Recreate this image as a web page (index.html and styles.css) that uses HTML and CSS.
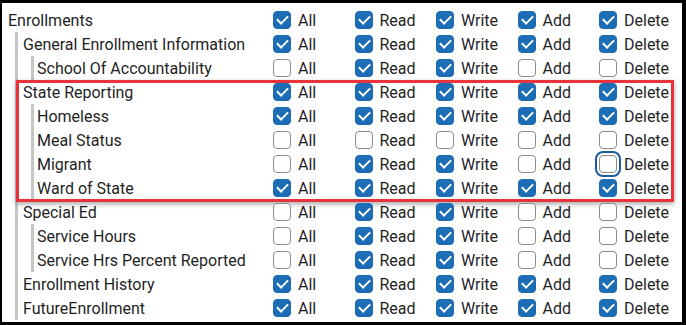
FILE: index.html
```html
<!DOCTYPE html>
<html lang="en">
<head>
    <meta charset="UTF-8">
    <meta name="viewport" content="width=device-width, initial-scale=1.0">
    <title>Enrollment Rights</title>
    <link rel="stylesheet" href="styles.css">
</head>
<body>
<div class="frame">
    <!-- highlight annotation -->
    <div class="highlight"></div>

    <div class="row">
        <span class="name">Enrollments</span>
        <div class="perms">
            <label class="perm"><input type="checkbox" checked> All</label>
            <label class="perm"><input type="checkbox" checked> Read</label>
            <label class="perm"><input type="checkbox" checked> Write</label>
            <label class="perm"><input type="checkbox" checked> Add</label>
            <label class="perm"><input type="checkbox" checked> Delete</label>
        </div>
    </div>
    <div class="children level1">
        <div class="row">
            <span class="name">General Enrollment Information</span>
            <div class="perms">
                <label class="perm"><input type="checkbox" checked> All</label>
                <label class="perm"><input type="checkbox" checked> Read</label>
                <label class="perm"><input type="checkbox" checked> Write</label>
                <label class="perm"><input type="checkbox" checked> Add</label>
                <label class="perm"><input type="checkbox" checked> Delete</label>
            </div>
        </div>
        <div class="children level2">
            <div class="row">
                <span class="name">School Of Accountability</span>
                <div class="perms">
                    <label class="perm"><input type="checkbox"> All</label>
                    <label class="perm"><input type="checkbox" checked> Read</label>
                    <label class="perm"><input type="checkbox" checked> Write</label>
                    <label class="perm"><input type="checkbox"> Add</label>
                    <label class="perm"><input type="checkbox"> Delete</label>
                </div>
            </div>
        </div>

        <div class="row">
            <span class="name">State Reporting</span>
            <div class="perms">
                <label class="perm"><input type="checkbox" checked> All</label>
                <label class="perm"><input type="checkbox" checked> Read</label>
                <label class="perm"><input type="checkbox" checked> Write</label>
                <label class="perm"><input type="checkbox" checked> Add</label>
                <label class="perm"><input type="checkbox" checked> Delete</label>
            </div>
        </div>
        <div class="children level2">
            <div class="row">
                <span class="name">Homeless</span>
                <div class="perms">
                    <label class="perm"><input type="checkbox" checked> All</label>
                    <label class="perm"><input type="checkbox" checked> Read</label>
                    <label class="perm"><input type="checkbox" checked> Write</label>
                    <label class="perm"><input type="checkbox" checked> Add</label>
                    <label class="perm"><input type="checkbox" checked> Delete</label>
                </div>
            </div>
            <div class="row">
                <span class="name">Meal Status</span>
                <div class="perms">
                    <label class="perm"><input type="checkbox"> All</label>
                    <label class="perm"><input type="checkbox"> Read</label>
                    <label class="perm"><input type="checkbox"> Write</label>
                    <label class="perm"><input type="checkbox"> Add</label>
                    <label class="perm"><input type="checkbox"> Delete</label>
                </div>
            </div>
            <div class="row">
                <span class="name">Migrant</span>
                <div class="perms">
                    <label class="perm"><input type="checkbox"> All</label>
                    <label class="perm"><input type="checkbox" checked> Read</label>
                    <label class="perm"><input type="checkbox" checked> Write</label>
                    <label class="perm"><input type="checkbox"> Add</label>
                    <label class="perm"><input type="checkbox" class="focused"> Delete</label>
                </div>
            </div>
            <div class="row">
                <span class="name">Ward of State</span>
                <div class="perms">
                    <label class="perm"><input type="checkbox" checked> All</label>
                    <label class="perm"><input type="checkbox" checked> Read</label>
                    <label class="perm"><input type="checkbox" checked> Write</label>
                    <label class="perm"><input type="checkbox" checked> Add</label>
                    <label class="perm"><input type="checkbox" checked> Delete</label>
                </div>
            </div>
        </div>

        <div class="row">
            <span class="name">Special Ed</span>
            <div class="perms">
                <label class="perm"><input type="checkbox"> All</label>
                <label class="perm"><input type="checkbox" checked> Read</label>
                <label class="perm"><input type="checkbox" checked> Write</label>
                <label class="perm"><input type="checkbox"> Add</label>
                <label class="perm"><input type="checkbox"> Delete</label>
            </div>
        </div>
        <div class="children level2">
            <div class="row">
                <span class="name">Service Hours</span>
                <div class="perms">
                    <label class="perm"><input type="checkbox"> All</label>
                    <label class="perm"><input type="checkbox" checked> Read</label>
                    <label class="perm"><input type="checkbox" checked> Write</label>
                    <label class="perm"><input type="checkbox"> Add</label>
                    <label class="perm"><input type="checkbox"> Delete</label>
                </div>
            </div>
            <div class="row">
                <span class="name">Service Hrs Percent Reported</span>
                <div class="perms">
                    <label class="perm"><input type="checkbox"> All</label>
                    <label class="perm"><input type="checkbox" checked> Read</label>
                    <label class="perm"><input type="checkbox" checked> Write</label>
                    <label class="perm"><input type="checkbox"> Add</label>
                    <label class="perm"><input type="checkbox"> Delete</label>
                </div>
            </div>
        </div>

        <div class="row">
            <span class="name">Enrollment History</span>
            <div class="perms">
                <label class="perm"><input type="checkbox" checked> All</label>
                <label class="perm"><input type="checkbox" checked> Read</label>
                <label class="perm"><input type="checkbox" checked> Write</label>
                <label class="perm"><input type="checkbox" checked> Add</label>
                <label class="perm"><input type="checkbox" checked> Delete</label>
            </div>
        </div>
        <div class="row">
            <span class="name">FutureEnrollment</span>
            <div class="perms">
                <label class="perm"><input type="checkbox" checked> All</label>
                <label class="perm"><input type="checkbox" checked> Read</label>
                <label class="perm"><input type="checkbox" checked> Write</label>
                <label class="perm"><input type="checkbox" checked> Add</label>
                <label class="perm"><input type="checkbox" checked> Delete</label>
            </div>
        </div>
    </div>
</div>
</body>
</html>
```

FILE: styles.css
```css
html, body {
    margin: 0;
    padding: 0;
    background-color: #000;
}
body {
    font-family: Roboto, "Noto Sans", Arial, sans-serif;
    font-size: 16px;
    color: #1f1f1f;
}
.frame {
    position: relative;
    box-sizing: border-box;
    width: 686px;
    height: 325px;
    border-style: solid;
    border-color: #000;
    border-width: 3px 4px 3px 2px;
    background-color: #fff;
    padding: 5px 0 0 6px;
    overflow: hidden;
}
.row {
    display: flex;
    align-items: center;
    height: 24px;
    padding-top: 1px;
    box-sizing: border-box;
}
.name {
    flex: 1;
    white-space: nowrap;
}
.perms {
    display: flex;
    width: 409px;
}
.perm {
    display: flex;
    align-items: center;
    gap: 7px;
    width: 81.5px;
}
.children {
    border-left: 3px solid #c6c6c6;
}
.level1 {
    margin-left: 7px;
    padding-left: 5px;
}
.level2 {
    margin-left: 8px;
    padding-left: 3px;
}
input[type="checkbox"] {
    appearance: none;
    -webkit-appearance: none;
    position: relative;
    margin: -1px 0 0 0;
    width: 18px;
    height: 18px;
    box-sizing: border-box;
    border: 1px solid #8c8c8c;
    border-radius: 4px;
    background-color: #fff;
    flex: none;
}
input[type="checkbox"]:checked {
    background-color: #1c6db5;
    border-color: #1c6db5;
}
input[type="checkbox"]:checked::after {
    content: "";
    position: absolute;
    left: 5px;
    top: 1px;
    width: 5px;
    height: 9px;
    border-right: 2px solid #fff;
    border-bottom: 2px solid #fff;
    transform: rotate(45deg);
}
input.focused {
    outline: 2px solid #1b5c9c;
    outline-offset: 2px;
}
.highlight {
    position: absolute;
    left: 14px;
    top: 77px;
    width: 658px;
    height: 122px;
    box-sizing: border-box;
    border: 3px solid #e8333b;
    box-shadow: 0 2px 5px rgba(0, 0, 0, 0.35);
    pointer-events: none;
}
```
